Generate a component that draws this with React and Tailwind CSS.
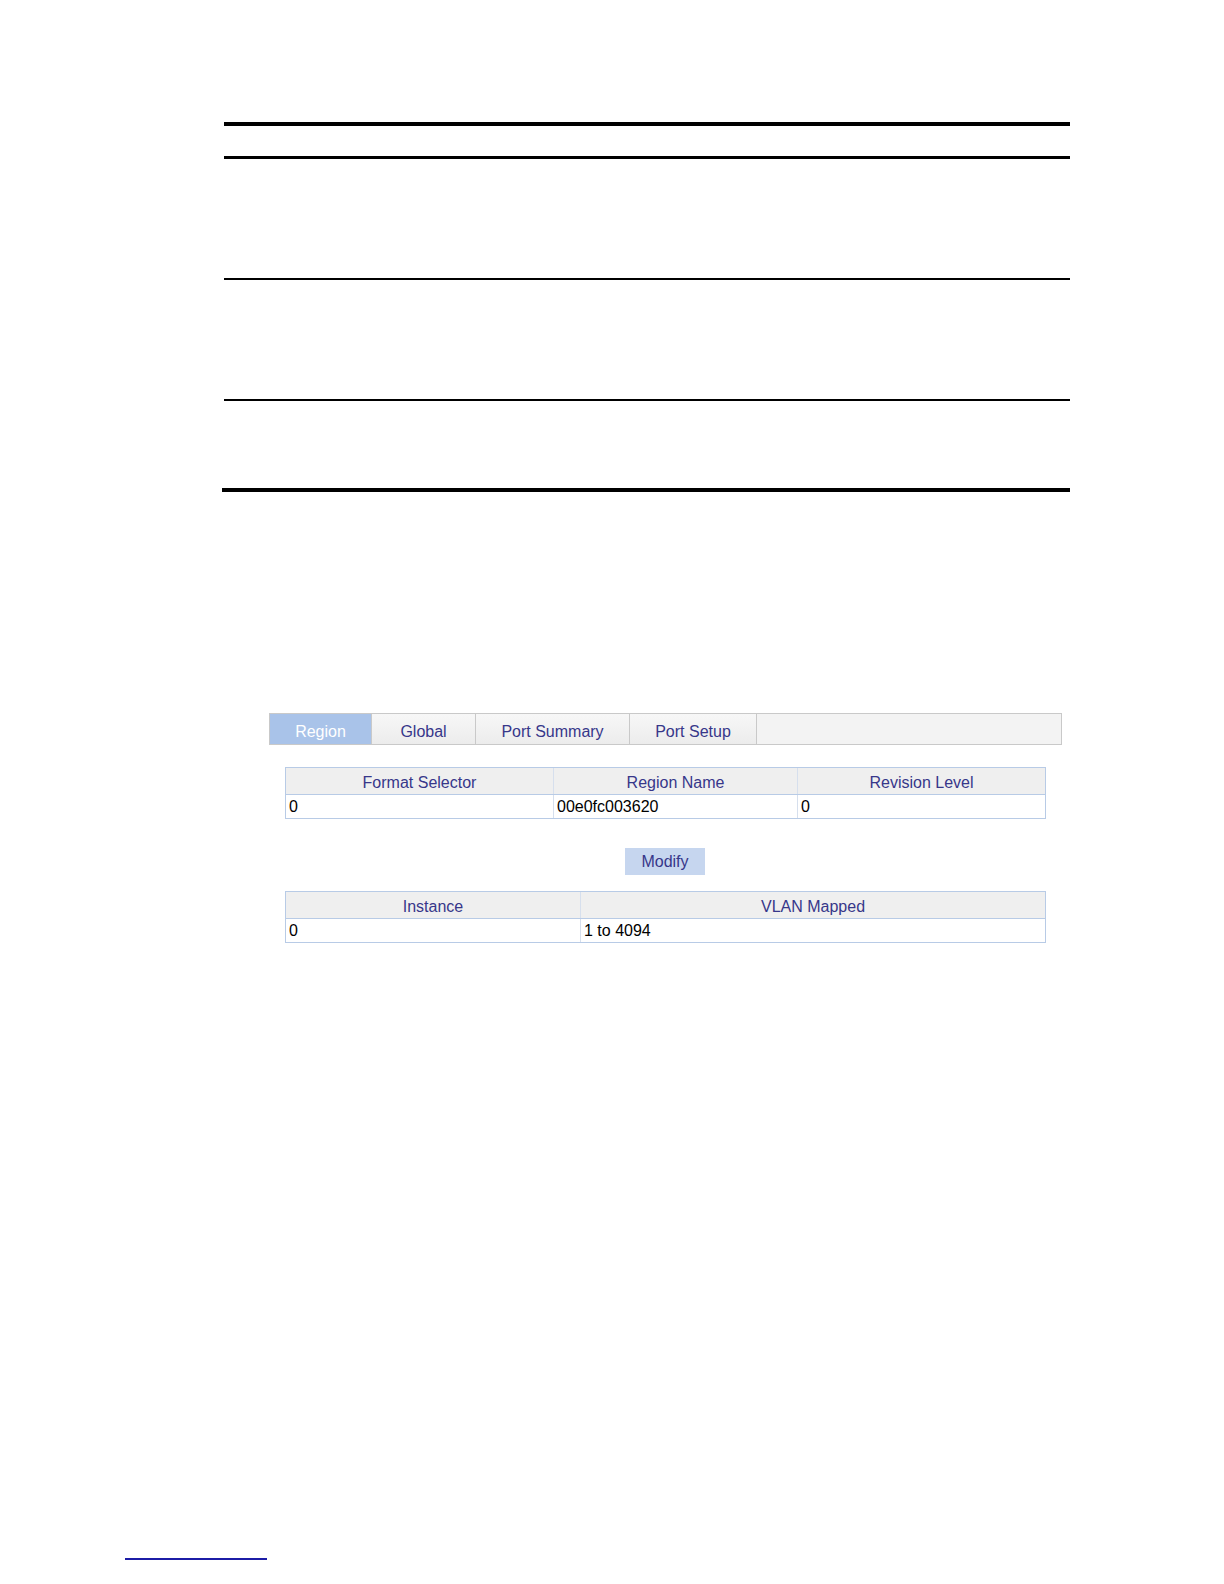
import React from "react";

const tabs = [
  { label: "Region", w: "w-[102px]", active: true },
  { label: "Global", w: "w-[104px]" },
  { label: "Port Summary", w: "w-[154px]" },
  { label: "Port Setup", w: "w-[127px]" },
];

const RuleTable = () => (
  <div className="ml-[224px] w-[846px]">
    <div className="h-[4px] bg-black" />
    <div className="h-[30px]" />
    <div className="h-[3px] bg-black" />
    <div className="h-[119px]" />
    <div className="h-[2px] bg-black" />
    <div className="h-[119px]" />
    <div className="h-[2px] bg-black" />
    <div className="h-[87px]" />
    <div className="h-[4px] bg-black -ml-[2px]" />
  </div>
);

const TabBar = () => (
  <div className="flex h-[32px] w-[793px] border border-[#c9c9c9] bg-[#f3f3f3]">
    {tabs.map((t) => (
      <div
        key={t.label}
        className={`${t.w} flex items-end justify-center pb-[2px] border-r border-[#c9c9c9] ${
          t.active ? "bg-[#a9c3e9] text-white" : "bg-gradient-to-b from-[#f7f7f7] to-[#ececec] text-[#37378a]"
        }`}
      >
        {t.label}
      </div>
    ))}
    <div className="flex-1" />
  </div>
);

const DataTable = ({ cols }) => (
  <div className="w-[761px] border border-[#b8cbe6]">
    <div className="flex h-[27px] bg-[#efefef] border-b border-[#b8cbe6] text-[#37378a]">
      {cols.map((c, i) => (
        <div
          key={c.head}
          className={`${c.w} flex items-end justify-center pb-[1px] ${i < cols.length - 1 ? "border-r border-[#d6dfed]" : ""}`}
        >
          {c.head}
        </div>
      ))}
    </div>
    <div className="flex h-[23px] bg-white text-black">
      {cols.map((c, i) => (
        <div
          key={c.head}
          className={`${c.w} flex items-center pl-[3px] ${i < cols.length - 1 ? "border-r border-[#d6dfed]" : ""}`}
        >
          {c.val}
        </div>
      ))}
    </div>
  </div>
);

export default function App() {
  return (
    <div className="relative w-[1224px] h-[1584px] bg-white font-['Liberation_Sans',Arial,sans-serif] text-[16px] leading-[20px]">
      <div className="pt-[122px]">
        <RuleTable />
      </div>

      <div className="ml-[269px] mt-[221px]">
        <TabBar />
        <div className="ml-[16px] mt-[22px]">
          <DataTable
            cols={[
              { head: "Format Selector", val: "0", w: "w-[268px]" },
              { head: "Region Name", val: "00e0fc003620", w: "w-[244px]" },
              { head: "Revision Level", val: "0", w: "flex-1" },
            ]}
          />
          <div className="flex justify-center w-[761px] mt-[29px] mb-[16px]">
            <button className="ml-[-1px] h-[27px] w-[80px] bg-[#c6d6ef] text-[#37378a] flex items-center justify-center">
              Modify
            </button>
          </div>
          <DataTable
            cols={[
              { head: "Instance", val: "0", w: "w-[295px]" },
              { head: "VLAN Mapped", val: "1 to 4094", w: "flex-1" },
            ]}
          />
        </div>
      </div>

      <div className="absolute left-[125px] top-[1558px] w-[142px] h-[2px] bg-[#1c1ca6]" />
    </div>
  );
}
